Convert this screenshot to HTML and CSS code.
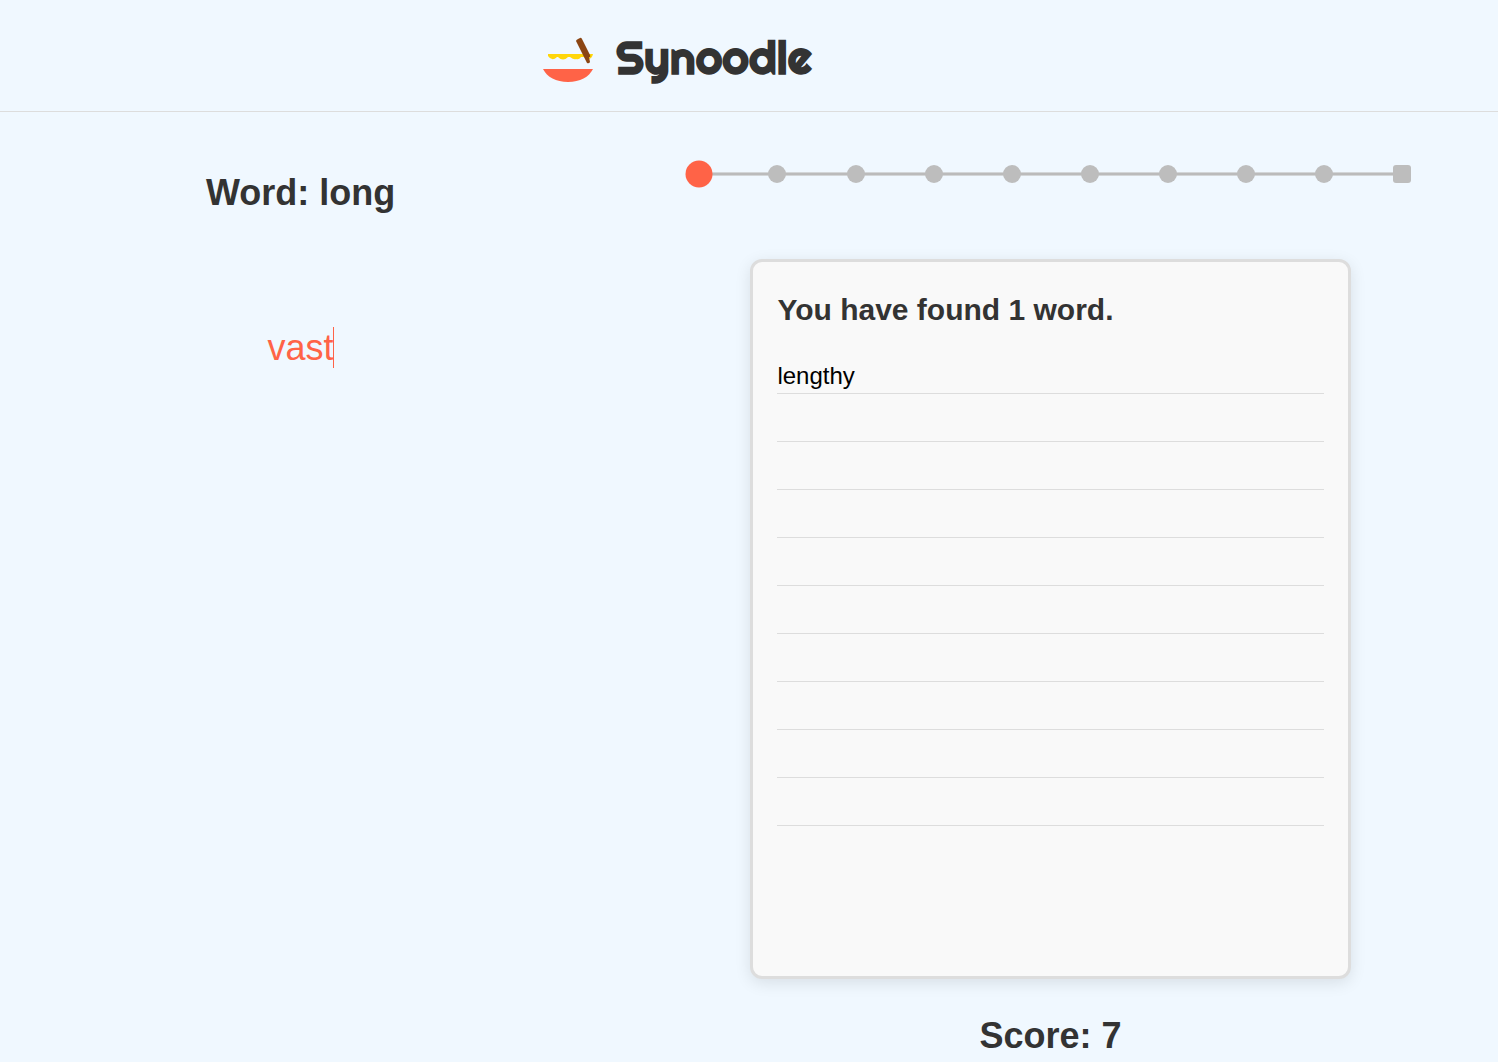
FILE: index.html
```html
<!DOCTYPE html>
<html lang="en">
<head>
  <meta charset="utf-8">
  <meta name="viewport" content="width=device-width, initial-scale=1">
  <title>Synoodle</title>
  <link rel="stylesheet" href="styles.css">
</head>
<body>
  <header class="header">
    <svg class="logo" viewBox="0 0 50 45" aria-hidden="true">
      <path fill="#ffd60a" d="M5 17H50Q49 22 45 22Q42 22 41 20H38Q36 23 33 22Q31 23 27 20H25Q20 25 15 20H14Q9 25 5 19Z"/>
      <path fill="#8b4513" d="M33 4Q33 3 35 2L37 1Q38 0 39 2L47 18Q48 20 46 20L47 25Q46 27 44 26Z"/>
      <path fill="#ff6347" d="M0 32H50C46 40 37 45 25 45C13 45 4 40 0 32Z"/>
    </svg>
    <h1 class="brand">Synoodle</h1>
  </header>
  <main class="game">
    <section class="play">
      <h2 class="headline">Word: long</h2>
      <div class="guess">
        <input class="guess-input" type="text" value="vast" aria-label="Your guess" autocomplete="off">
        <span class="guess-caret"></span>
      </div>
    </section>
    <section class="results">
      <ol class="progress" aria-label="Progress">
        <li class="step step-current"></li>
        <li class="step"></li>
        <li class="step"></li>
        <li class="step"></li>
        <li class="step"></li>
        <li class="step"></li>
        <li class="step"></li>
        <li class="step"></li>
        <li class="step"></li>
        <li class="step step-last"></li>
      </ol>
      <div class="card">
        <h3 class="card-title">You have found 1 word.</h3>
        <ul class="words">
          <li class="word">lengthy</li>
          <li class="word"></li>
          <li class="word"></li>
          <li class="word"></li>
          <li class="word"></li>
          <li class="word"></li>
          <li class="word"></li>
          <li class="word"></li>
          <li class="word"></li>
          <li class="word"></li>
        </ul>
      </div>
      <h2 class="headline">Score: 7</h2>
    </section>
  </main>
</body>
</html>
```
FILE: styles.css
```css
* {
  box-sizing: border-box;
  margin: 0;
  padding: 0;
}

body {
  background: #f0f8ff;
  color: #333;
  font-family: Arial, "Liberation Sans", sans-serif;
}

.header {
  display: flex;
  align-items: center;
  gap: 23px;
  min-height: 112px;
  padding: 8px 0 0 36.25%;
  border-bottom: 1px solid #ddd;
}

.logo {
  width: 50px;
  height: 45px;
}

.brand {
  padding-bottom: 4px;
  font-family: Righteous, Lato, "Liberation Sans", sans-serif;
  font-size: 46px;
  font-weight: 900;
  line-height: 56px;
}

.game {
  display: grid;
  grid-template-columns: 2fr 3fr;
}

.play {
  display: flex;
  flex-direction: column;
  align-items: center;
  gap: 114px;
  padding: 60px 0 0 2px;
}

.headline {
  font-size: 36px;
  line-height: 41px;
}

.guess {
  position: relative;
  width: 80%;
}

.guess-input {
  display: block;
  width: 100%;
  height: 41px;
  border: 0;
  outline: 0;
  background: transparent;
  color: #ff6347;
  caret-color: transparent;
  font: inherit;
  font-size: 36px;
  text-align: center;
}

.guess-caret {
  position: absolute;
  top: 0;
  left: calc(50% + 32px);
  width: 1px;
  height: 41px;
  background: #ff6347;
}

.results {
  display: flex;
  flex-direction: column;
  align-items: center;
  padding: 53px 0 4px 4px;
}

.progress {
  display: flex;
  align-items: center;
  justify-content: space-between;
  width: 80.5%;
  margin-bottom: 76px;
  background: linear-gradient(#d3d6d8 1px, #bbb 1px 3px, #d3d6d8 3px) center / 99% 4px no-repeat;
  list-style: none;
}

.step {
  width: 18px;
  height: 18px;
  border-radius: 50%;
  background: #bdbdbd;
}

.step-current {
  background: #ff6347;
  transform: scale(1.5);
}

.step-last {
  border-radius: 3px;
}

.card {
  width: 67.1%;
  min-height: 720px;
  margin-bottom: 36px;
  padding: 24px;
  border: 3px solid #ddd;
  border-radius: 12px;
  background: #f9f9f9;
  box-shadow: 0 4px 16px rgba(0, 0, 0, 0.1);
}

.card-title {
  margin-bottom: 12px;
  font-size: 30px;
  line-height: 48px;
}

.words {
  list-style: none;
}

.word {
  display: flex;
  align-items: flex-end;
  height: 48px;
  padding-bottom: 4px;
  border-bottom: 1px solid #ddd;
  color: #000;
  font-size: 24px;
  line-height: 27px;
}
```
